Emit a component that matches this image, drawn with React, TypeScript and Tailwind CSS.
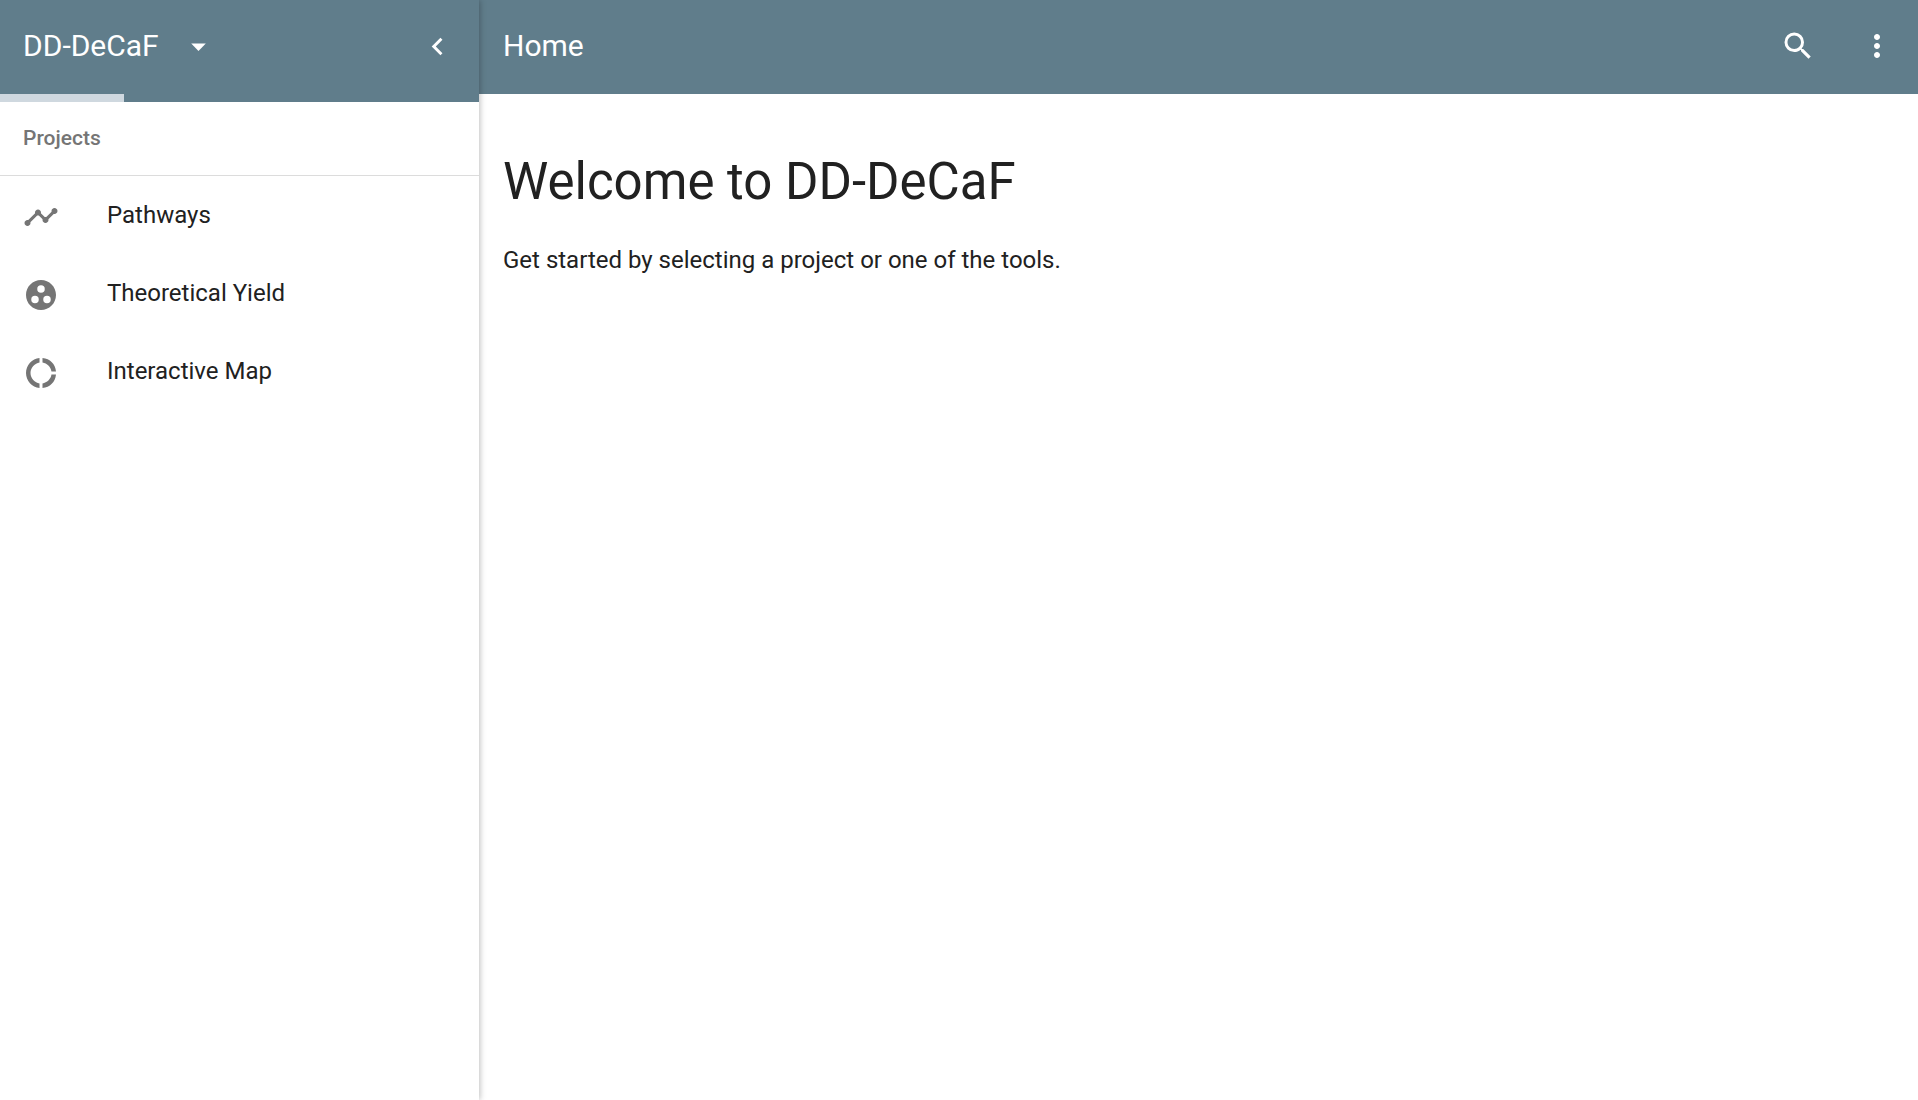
import {
  MdArrowDropDown,
  MdChevronLeft,
  MdDonutLarge,
  MdGroupWork,
  MdMoreVert,
  MdSearch,
  MdTimeline,
} from "react-icons/md";

const tools = [
  { label: "Pathways", Icon: MdTimeline },
  { label: "Theoretical Yield", Icon: MdGroupWork },
  { label: "Interactive Map", Icon: MdDonutLarge },
];

function Sidebar() {
  return (
    <aside className="z-10 flex w-[479px] shrink-0 flex-col bg-white shadow-[1px_0_6px_rgba(0,0,0,0.26)]">
      <header className="flex h-[94px] items-center bg-[#607d8b] pb-0.5 pl-[23px] pr-6 text-white">
        <button type="button" className="flex items-center gap-[22px] text-[30px] leading-9">
          DD-DeCaF
          <MdArrowDropDown className="size-[35px]" aria-hidden="true" />
        </button>
        <button type="button" aria-label="Collapse sidebar" className="ml-auto">
          <MdChevronLeft className="size-[35px]" />
        </button>
      </header>
      <div className="h-2 bg-[#607d8b]" role="progressbar" aria-label="Loading">
        <div className="h-full w-[124px] bg-[#cfd8df]" />
      </div>
      <h2 className="flex h-[74px] items-center border-b border-[#dcdcdc] pb-0.5 pl-[23px] text-[21px] font-medium leading-7 text-[#757575]">
        Projects
      </h2>
      <nav>
        <ul>
          {tools.map(({ label, Icon }) => (
            <li key={label}>
              <a href="#" className="flex h-[78px] items-start gap-12 pl-[23px] pt-[23px] text-2xl text-[#212121]">
                <Icon className="size-9 text-[#757575]" aria-hidden="true" />
                {label}
              </a>
            </li>
          ))}
        </ul>
      </nav>
    </aside>
  );
}

export default function App() {
  return (
    <div className="flex min-h-screen bg-white font-[Roboto,sans-serif]">
      <Sidebar />
      <div className="flex min-w-0 flex-1 flex-col">
        <header className="flex h-[94px] items-center bg-[#607d8b] pb-0.5 pl-6 pr-[23px] text-white">
          <span className="text-[30px] leading-9">Home</span>
          <div className="ml-auto flex gap-[43px]">
            <button type="button" aria-label="Search">
              <MdSearch className="size-9" />
            </button>
            <button type="button" aria-label="More options">
              <MdMoreVert className="size-9" />
            </button>
          </div>
        </header>
        <main className="px-6 pt-14 text-[#212121]">
          <h1 className="text-[51px] leading-[64px]">Welcome to DD-DeCaF</h1>
          <p className="mt-[30px] text-2xl">Get started by selecting a project or one of the tools.</p>
        </main>
      </div>
    </div>
  );
}
